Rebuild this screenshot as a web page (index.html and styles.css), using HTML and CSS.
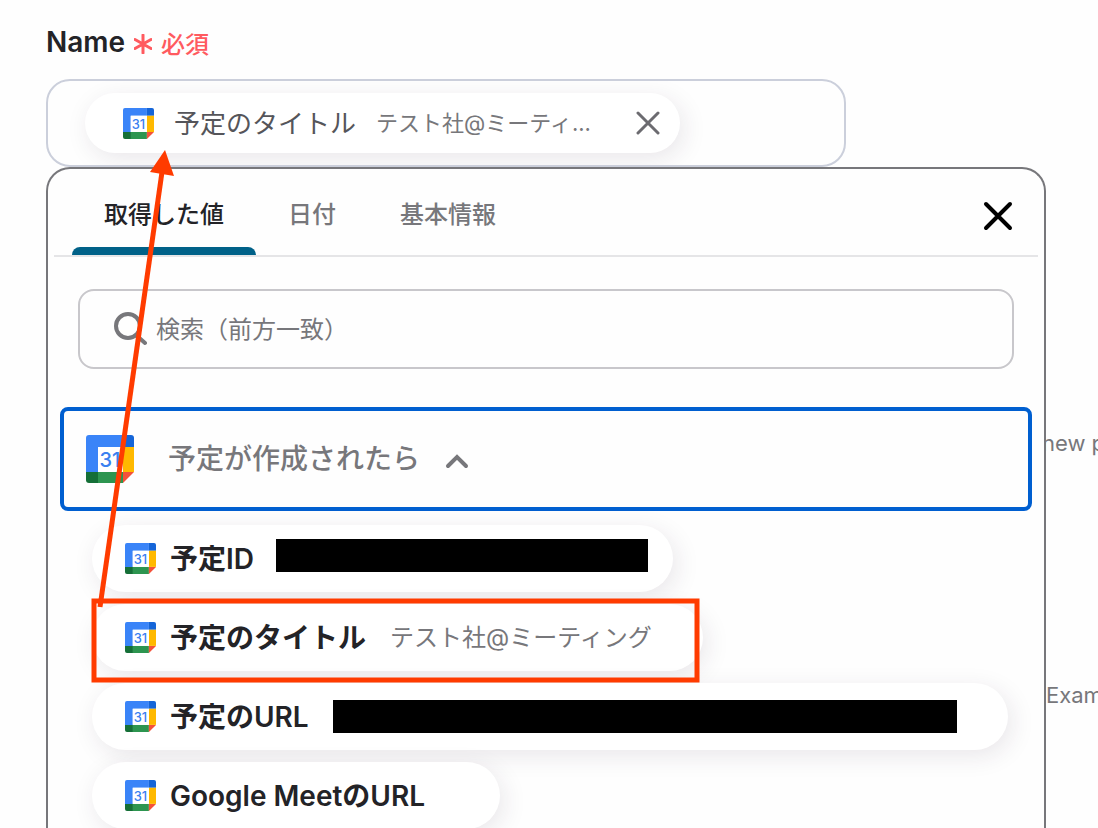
FILE: index.html
```
<!DOCTYPE html>
<html lang="ja">
<head>
    <meta charset="UTF-8">
    <meta name="viewport" content="width=device-width, initial-scale=1.0">
    <title>Name</title>
    <link rel="stylesheet" href="styles.css">
</head>

<body>
    <!-- calendar icon, reused below -->
    <svg class="symbols" aria-hidden="true">
        <symbol id="calendar" viewBox="0 0 48 48">
            <path fill="#3a84f8" d="M3 0h34v12H12v25H0V3a3 3 0 0 1 3-3z" />
            <path fill="#1565d8" d="M37 0h8a3 3 0 0 1 3 3v9H37z" />
            <path fill="#ffb900" d="M37 12h11v25H37z" />
            <path fill="#2d9550" d="M11 37h26v11H11z" />
            <path fill="#156f37" d="M0 37h12v11H3a3 3 0 0 1-3-3z" />
            <path fill="#f4513a" d="M37 37h11L37 48z" />
            <path fill="#fff" d="M12 12h25v25H12z" />
            <text x="24" y="32" text-anchor="middle" class="day">31</text>
        </symbol>
    </svg>

    <div class="page">
        <main>
            <div class="label">
                <span class="name" id="name-label">Name</span>
                <svg width="18" height="20" viewBox="0 0 18 20" class="star">
                    <path d="M9 1v18M1 5.500l16 9M17 5.500l-16 9" />
                </svg>
                <span class="required">必須</span>
            </div>

            <div class="field" role="group" aria-labelledby="name-label">
                <div class="chip">
                    <svg class="icon"><use href="#calendar" /></svg>
                    <span class="chip-title">予定のタイトル</span>
                    <span class="chip-value">テスト社@ミーティ...</span>
                    <button class="remove" aria-label="削除">
                        <svg width="24" height="24" viewBox="0 0 24 24"><path d="M2 2l20 20M22 2L2 22" /></svg>
                    </button>
                </div>
            </div>

            <div class="panel">
                <div class="tabs">
                    <button class="tab active">取得した値</button>
                    <button class="tab">日付</button>
                    <button class="tab">基本情報</button>
                    <button class="close" aria-label="閉じる">
                        <svg width="30" height="30" viewBox="0 0 30 30"><path d="M3 3l24 24M27 3L3 27" /></svg>
                    </button>
                </div>

                <label class="search">
                    <svg width="34" height="34" viewBox="0 0 34 34">
                        <circle cx="15" cy="14" r="12" />
                        <path d="M23 23l9 8" />
                    </svg>
                    <input type="text" placeholder="検索（前方一致）" aria-label="検索">
                </label>

                <button class="group">
                    <svg class="icon-large"><use href="#calendar" /></svg>
                    <span class="group-title">予定が作成されたら</span>
                    <svg class="chevron" width="24" height="16" viewBox="0 0 24 16"><path d="M3 13l9-9 9 9" /></svg>
                </button>

                <div class="items">
                    <button class="item">
                        <svg class="icon"><use href="#calendar" /></svg>
                        <span class="item-title">予定ID</span>
                        <span class="masked masked-id"></span>
                    </button>
                    <button class="item">
                        <svg class="icon"><use href="#calendar" /></svg>
                        <span class="item-title">予定のタイトル</span>
                        <span class="item-value">テスト社@ミーティング</span>
                    </button>
                    <button class="item">
                        <svg class="icon"><use href="#calendar" /></svg>
                        <span class="item-title">予定のURL</span>
                        <span class="masked masked-url"></span>
                    </button>
                    <button class="item">
                        <svg class="icon"><use href="#calendar" /></svg>
                        <span class="item-title">Google MeetのURL</span>
                        <span class="item-value"></span>
                    </button>
                </div>
            </div>
        </main>

        <aside>
            <p class="hint">new p</p>
            <p class="example">Exam</p>
        </aside>

        <!-- arrow from the selected item up to the field -->
        <svg class="arrow" width="1098" height="828" viewBox="0 0 1098 828">
            <rect x="94" y="601" width="603" height="79" />
            <path class="line" d="M100 607L162 172" />
            <path class="head" d="M165 150l9 26-24-4z" />
        </svg>
    </div>
</body>

</html>
```
FILE: styles.css
```
* {
    box-sizing: border-box;
}

body {
    margin: 0;
    background: #fefefe;
    color: #232327;
    font-family: Inter, "Noto Sans CJK JP", sans-serif;
}

button,
input {
    font: inherit;
    color: inherit;
    background: none;
    border: 0;
    padding: 0;
    margin: 0;
}

svg {
    display: block;
    flex-shrink: 0;
    fill: none;
    stroke-linecap: round;
}

.symbols {
    display: none;
}

.day {
    fill: #3a80f0;
    stroke: none;
    font-size: 20px;
    font-weight: 500;
}

.page {
    position: relative;
    display: grid;
    grid-template-columns: 1fr 52px;
    height: 100vh;
    overflow: hidden;
}

main {
    display: flex;
    flex-direction: column;
    min-width: 0;
    padding: 22px 0 0 46px;
}

/* label */
.label {
    display: flex;
    align-items: center;
    gap: 9px;
    height: 40px;
    margin-bottom: 17px;
}

.name {
    font-size: 28px;
    font-weight: 600;
}

.star {
    stroke: #ff5a5f;
    stroke-width: 3;
    margin-top: 4px;
}

.required {
    color: #ff5a5f;
    font-size: 24px;
    font-weight: 500;
}

/* field */
.field {
    display: flex;
    flex-shrink: 0;
    width: 80%;
    height: 88px;
    padding: 12px 37px;
    border: 2px solid #cbcfdb;
    border-radius: 24px;
    overflow: hidden;
}

.chip,
.item {
    display: flex;
    align-items: center;
    background: #fff;
    box-shadow: 4px 6px 24px rgba(50, 30, 60, 0.1);
    white-space: nowrap;
}

.chip {
    height: 60px;
    padding: 0 20px 0 38px;
    border-radius: 30px;
}

.icon {
    width: 31px;
    height: 31px;
}

.chip-title,
.chip-value,
.group-title,
.item-title,
.item-value {
    padding-bottom: 4px;
}

.chip-title {
    margin-left: 20px;
    font-size: 26px;
    color: #55555a;
}

.chip-value {
    margin-left: 20px;
    font-size: 22px;
    color: #77777b;
}

.remove {
    margin-left: 45px;
    stroke: #6c6b70;
    stroke-width: 3;
}

/* panel */
.panel {
    position: relative;
    z-index: 1;
    flex: 1 0 auto;
    border: 2px solid #77777b;
    border-bottom: 0;
    border-radius: 24px 24px 0 0;
    background: #fefefe;
}

.tabs {
    display: flex;
    height: 88px;
    margin: 0 6px;
    padding: 0 25px 0 18px;
    border-bottom: 2px solid #e5e5e7;
}

.tab {
    padding: 8px 32px 0;
    font-size: 24px;
    font-weight: 500;
    color: #77777b;
    border-bottom: 8px solid transparent;
}

.tab.active {
    position: relative;
    color: #232327;
}

.tab.active::after {
    content: "";
    position: absolute;
    left: 0;
    right: 0;
    bottom: -8px;
    height: 8px;
    border-radius: 8px 8px 0 0;
    background: #006188;
}

.close {
    margin-left: auto;
    padding-top: 8px;
    stroke: #000;
    stroke-width: 4;
}

.search {
    display: flex;
    align-items: center;
    gap: 9px;
    height: 80px;
    margin: 32px 30px 38px;
    padding: 0 33px;
    border: 2px solid #c8c7cb;
    border-radius: 16px;
    stroke: #77777b;
    stroke-width: 4;
}

.search input {
    flex: 1;
    min-width: 0;
    height: 48px;
    font-size: 24px;
    outline: none;
}

.search input::placeholder {
    color: #77777b;
    opacity: 1;
}

.group {
    display: flex;
    align-items: center;
    width: calc(100% - 24px);
    height: 104px;
    margin: 0 12px 14px;
    padding: 0 22px;
    border: 4px solid #005fd0;
    border-radius: 8px;
    font-size: 28px;
    font-weight: 500;
    color: #77777b;
}

.icon-large {
    width: 48px;
    height: 48px;
    margin-right: 34px;
}

.chevron {
    margin-left: 25px;
    margin-top: 4px;
    stroke: #77777b;
    stroke-width: 4;
}

/* items */
.items {
    display: flex;
    flex-direction: column;
    align-items: flex-start;
    gap: 12px;
    padding-left: 44px;
}

.item {
    height: 67px;
    padding: 0 51px 0 33px;
    border-radius: 34px;
}

.item-title {
    margin-left: 14px;
    margin-right: 24px;
    font-size: 28px;
    font-weight: 600;
}

.item-value {
    font-size: 24px;
    color: #77777b;
}

.masked {
    height: 33px;
    background: #000;
}

.masked-id {
    width: 372px;
    margin-left: -2px;
    margin-right: -26px;
    margin-bottom: 7px;
}

.masked-url {
    width: 624px;
}

/* text behind the panel */
aside {
    font-size: 22px;
    line-height: 32px;
    color: #77777b;
    white-space: nowrap;
}

aside p {
    margin: 0;
}

.hint {
    padding-top: 427px;
    text-indent: -4px;
}

.example {
    padding-top: 220px;
}

.arrow {
    position: absolute;
    z-index: 2;
    top: 0;
    left: 0;
    stroke: #ff3b00;
    stroke-width: 5;
    stroke-linecap: butt;
    pointer-events: none;
}

.arrow .head {
    fill: #ff3b00;
    stroke: none;
}
```
